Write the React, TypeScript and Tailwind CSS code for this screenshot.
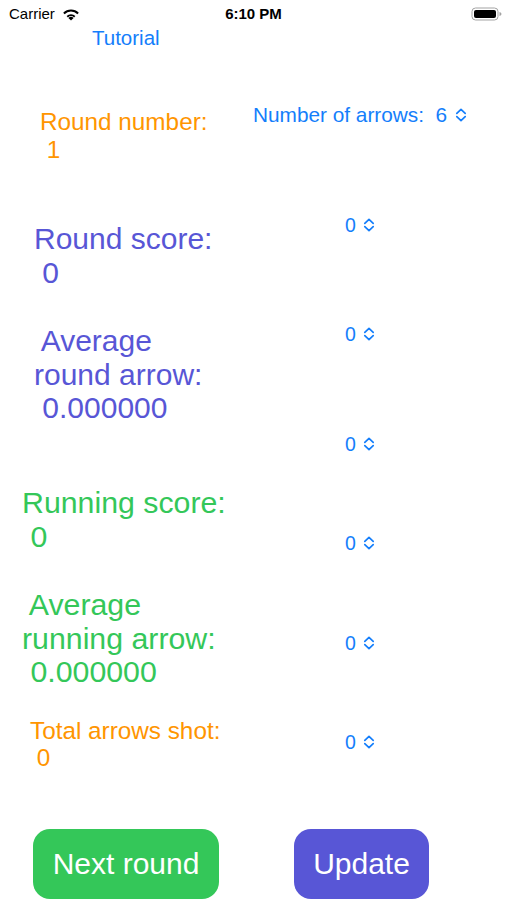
import React from "react";

const Chevrons = () => (
  <svg width="12" height="14" viewBox="0 0 12 14" className="inline-block" fill="none" stroke="#147efb" strokeWidth="1.7" strokeLinecap="round" strokeLinejoin="round">
    <path d="M1.8 5.4 L6 1.4 L10.2 5.4" />
    <path d="M1.8 8.6 L6 12.6 L10.2 8.6" />
  </svg>
);

const Stepper = ({ value, className }: { value: string; className?: string }) => (
  <div className={`flex items-center h-[24px] text-[19.5px] leading-[24px] text-[#147efb] whitespace-pre ${className ?? ""}`}>
    <span>{value}</span>
    <span className="ml-[7px] flex items-center">
      <Chevrons />
    </span>
  </div>
);

const Wifi = () => (
  <svg width="18" height="13" viewBox="0 0 18 13">
    <path d="M9 12.6 L6.4 9.9 A3.8 3.8 0 0 1 11.6 9.9 Z" fill="#000" />
    <path d="M4.6 8.1 A6.3 6.3 0 0 1 13.4 8.1 L12.1 9.4 A4.5 4.5 0 0 0 5.9 9.4 Z" fill="#000" />
    <path d="M1.2 4.8 A11 11 0 0 1 16.8 4.8 L15.4 6.2 A9 9 0 0 0 2.6 6.2 Z" fill="#000" />
  </svg>
);

const Battery = () => (
  <svg width="31" height="14" viewBox="0 0 31 14">
    <rect x="1" y="1" width="26" height="12" rx="3.5" fill="none" stroke="#a3a3a3" strokeWidth="1" />
    <rect x="3" y="3" width="22" height="8" rx="2" fill="#000" />
    <path d="M28.5 5 Q30.5 5.3 30.5 7 Q30.5 8.7 28.5 9 Z" fill="#a3a3a3" />
  </svg>
);

export default function App() {
  const font = { fontFamily: '"Liberation Sans", Arial, Helvetica, sans-serif' };
  return (
    <div className="w-[507px] h-[900px] bg-white overflow-hidden" style={font}>
      {/* status bar */}
      <div className="h-[26px] pt-[2px] grid grid-cols-3 items-center">
        <div className="flex items-center pl-[9px] gap-[7px]">
          <span className="text-[15px] leading-[18px] text-black">Carrier</span>
          <Wifi />
        </div>
        <div className="text-center text-[15px] leading-[18px] font-bold text-black">6:10 PM</div>
        <div className="flex justify-end pr-[5px]">
          <Battery />
        </div>
      </div>

      {/* Tutorial */}
      <div className="pl-[92px] text-[20.5px] leading-[24px] text-[#147efb]">Tutorial</div>

      {/* content */}
      <div className="flex">
        {/* left column */}
        <div className="w-[253px] shrink-0 flex flex-col whitespace-pre">
          <div className="mt-[57.5px] pl-[40px] text-[24.3px] leading-[28px] text-[#ff9500]">
            <div>Round number:</div>
            <div> 1</div>
          </div>
          <div className="mt-[58.5px] pl-[34px] text-[30px] leading-[33.5px] text-[#5856d6]">
            <div>Round score:</div>
            <div> 0</div>
          </div>
          <div className="mt-[35.25px] pl-[34px] text-[30px] leading-[33.5px] text-[#5856d6]">
            <div> Average</div>
            <div>round arrow:</div>
            <div> 0.000000</div>
          </div>
          <div className="mt-[61.5px] pl-[22px] text-[30.3px] leading-[33.5px] text-[#34c759]">
            <div>Running score:</div>
            <div> 0</div>
          </div>
          <div className="mt-[35px] pl-[22px] text-[30.3px] leading-[33.5px] text-[#34c759]">
            <div> Average</div>
            <div>running arrow:</div>
            <div> 0.000000</div>
          </div>
          <div className="mt-[27.75px] pl-[30px] text-[24.3px] leading-[27px] text-[#ff9500]">
            <div>Total arrows shot:</div>
            <div> 0</div>
          </div>
        </div>

        {/* right column */}
        <div className="flex flex-col">
          <div className="mt-[53px] flex items-center h-[24px] text-[20.8px] leading-[24px] text-[#147efb] whitespace-pre">
            <span>Number of arrows:  6</span>
            <span className="ml-[8px] flex items-center">
              <Chevrons />
            </span>
          </div>
          <Stepper value="0" className="mt-[86px] ml-[92px]" />
          <Stepper value="0" className="mt-[85px] ml-[92px]" />
          <Stepper value="0" className="mt-[86px] ml-[92px]" />
          <Stepper value="0" className="mt-[75px] ml-[92px]" />
          <Stepper value="0" className="mt-[75.5px] ml-[92px]" />
          <Stepper value="0" className="mt-[75.5px] ml-[92px]" />
        </div>
      </div>

      {/* buttons */}
      <div className="flex mt-[58.5px]">
        <button className="ml-[33px] w-[186px] h-[70px] rounded-[17px] bg-[#34c759] text-white text-[30px] leading-[34px] flex items-center justify-center">
          Next round
        </button>
        <button className="ml-[75px] w-[135px] h-[70px] rounded-[17px] bg-[#5856d6] text-white text-[30px] leading-[34px] flex items-center justify-center">
          Update
        </button>
      </div>
    </div>
  );
}
